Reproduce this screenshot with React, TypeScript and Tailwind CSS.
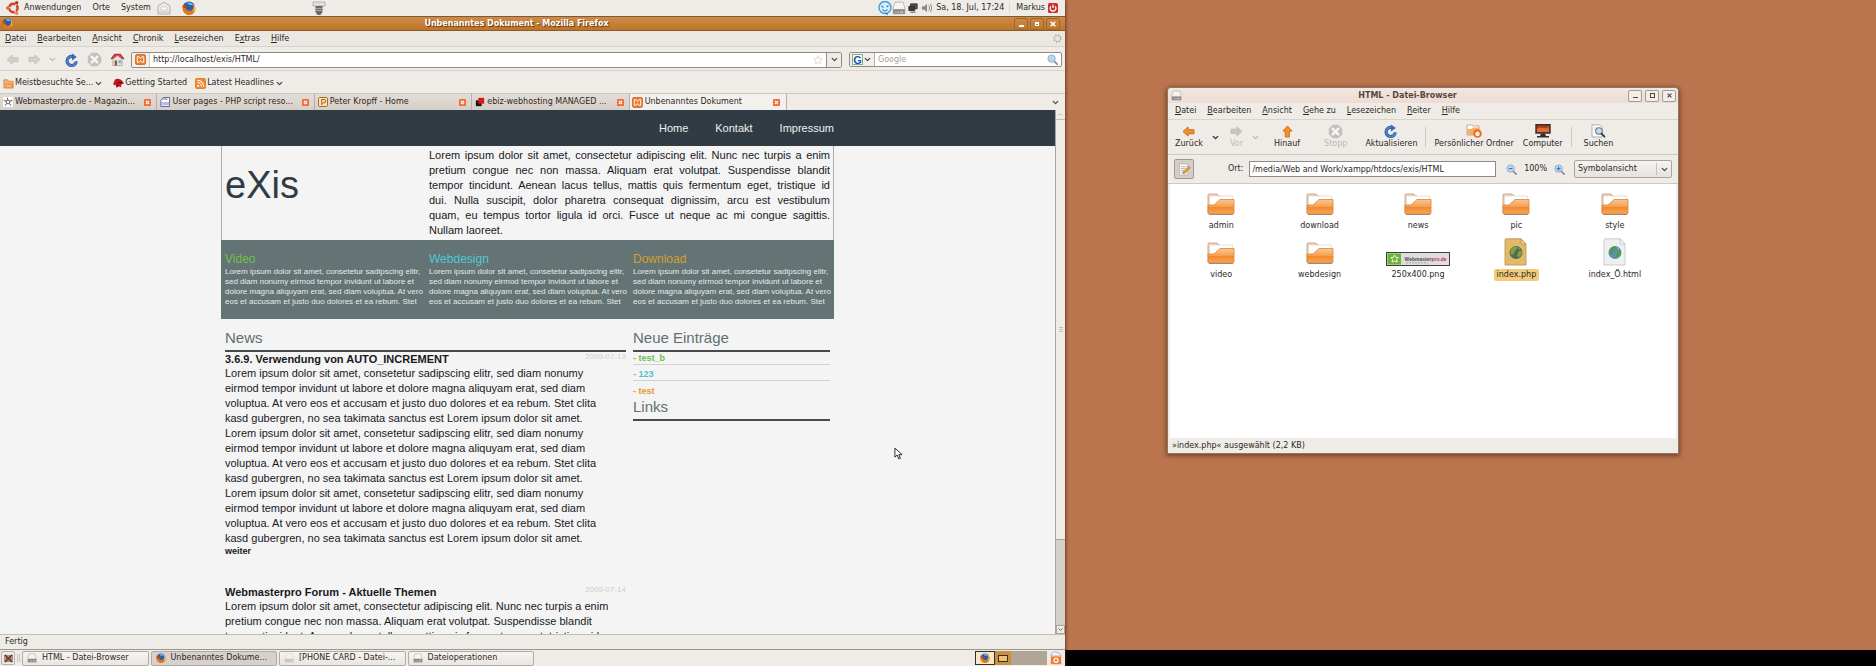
import React from "react";
import { ChevronDown, ChevronUp } from "lucide-react";

type IconProps = { className?: string };

const Firefox = ({ className = "size-[14px]" }: IconProps) => (
  <svg viewBox="0 0 16 16" className={className} aria-hidden="true">
    <circle cx="8" cy="7.6" r="7" fill="#2d5fa8" />
    <path d="M6 2c3-1 6 0 7 3-2-1-4 0-5-1-1 0-2-1-2-2Z" fill="#7db6e8" />
    <path d="M1 4c0 3 1 4 3 4 1 2 3 4 6 3 3-1 4-4 3-7 2 2 3 5 2 7-1 3-4 5-7 5S1 13 .6 9C.4 7 .5 5 1 4Z" fill="#e2761b" />
    <path d="M12.500 2c2 2 3 5 2.500 8-1 1-2 2-3 2 2-3 2-6 .5-10Z" fill="#f5c542" />
    <path d="M1 4c1 1 2 1 4 1l1 2-2 1C2 8 1 7 1 4Z" fill="#c2451a" />
  </svg>
);

const Ubuntu = () => (
  <svg viewBox="0 0 16 16" className="size-[14px]" aria-hidden="true">
    <circle cx="8.500" cy="8" r="4.800" fill="none" stroke="#d2412a" strokeWidth="2.800" strokeDasharray="8.500 1.550" strokeDashoffset="4.200" />
    <circle cx="1.900" cy="8" r="1.900" fill="#e0663a" />
    <circle cx="12.200" cy="2" r="1.900" fill="#b5301e" />
    <circle cx="12.200" cy="14" r="1.900" fill="#e58a4a" />
  </svg>
);

const Drive = ({ className = "size-[12px]" }: IconProps) => (
  <svg viewBox="0 0 12 12" className={className} aria-hidden="true">
    <path d="M2.500 1h7l1.500 5v5H1V6Z" fill="#f4f4f3" stroke="#b9b6b2" strokeWidth=".8" />
    <path d="M1 7h10v4H1Z" fill="#8b8987" />
    <path d="M3 9.500h1M5 9.500h1M7 9.500h2.500" stroke="#dedcda" strokeWidth="1" />
  </svg>
);

const Reload = ({ className = "size-[15px]" }: IconProps) => (
  <svg viewBox="0 0 16 16" className={className} aria-hidden="true">
    <path d="M12.800 9.500A5.200 5.200 0 1 1 8.500 4" fill="none" stroke="#27549f" strokeWidth="3.600" />
    <path d="M12.800 9.500A5.200 5.200 0 1 1 8.500 4" fill="none" stroke="#4f83d0" strokeWidth="2" />
    <path d="M8 .5 13.500 4.500 8 8.500Z" fill="#3668b5" />
  </svg>
);

const StopIcon = () => (
  <svg viewBox="0 0 16 16" className="size-[15px]" aria-hidden="true">
    <path d="M5 .8h6L15.200 5v6L11 15.200H5L.8 11V5Z" fill="#c3c0bd" />
    <path d="m5 5 6 6m0-6-6 6" stroke="#f8f6f4" strokeWidth="2.600" strokeLinecap="round" />
  </svg>
);

const Arrow = ({ fill, stroke, className = "" }: { fill: string; stroke: string; className?: string }) => (
  <svg viewBox="0 0 14 12" className={"h-[11px] w-[13px] " + className} aria-hidden="true">
    <path d="M1 6 6.500 1v3H13v4.500H6.500V11Z" fill={fill} stroke={stroke} strokeWidth="1" strokeLinejoin="round" />
  </svg>
);

const HomeIcon = () => (
  <svg viewBox="0 0 16 14" className="h-[13px] w-[15px]" aria-hidden="true">
    <path d="M3 6h10v7.500H3Z" fill="#e9e4dc" stroke="#a19c96" strokeWidth=".8" />
    <path d="M5 8h2.500v5.500H5Z" fill="#8c5a33" />
    <path d="M9 8h3v3H9Z" fill="#7fa8d8" />
    <path d="M1 6.500 5 1.500h6l4 5" fill="#c75252" stroke="#a93636" strokeWidth="1.200" />
    <path d="m3 7 5-4 5 4Z" fill="#e9e4dc" />
  </svg>
);

const Xampp = () => (
  <svg viewBox="0 0 12 12" className="size-[11px] shrink-0" aria-hidden="true">
    <rect x=".5" y=".5" width="11" height="11" rx="2" fill="#ee7c33" stroke="#d0672a" />
    <path d="M2.500 3h2L6 4.800 7.500 3h2v6h-2L6 7.200 4.500 9h-2Z" fill="none" stroke="#fff" strokeWidth="1" strokeLinejoin="round" />
  </svg>
);

const Magnifier = ({ sign }: { sign?: "+" | "-" }) => (
  <svg viewBox="0 0 12 12" className="size-[11px] shrink-0" aria-hidden="true">
    <path d="m7.500 7.500 3.500 3.500" stroke="#8b8f94" strokeWidth="2" strokeLinecap="round" />
    <circle cx="5" cy="5" r="4" fill="#b9d6ef" stroke="#8fabc6" strokeWidth="1" />
    {sign && <path d="M3 5h4" stroke="#3b73ad" strokeWidth="1.200" />}
    {sign === "+" && <path d="M5 3v4" stroke="#3b73ad" strokeWidth="1.200" />}
  </svg>
);

const TabClose = () => (
  <svg viewBox="0 0 8 8" className="size-[7px] shrink-0" aria-hidden="true">
    <rect width="8" height="8" rx="1" fill="#ee6f35" />
    <path d="m2.200 2.200 3.600 3.600m0-3.600L2.200 5.800" stroke="#fff" strokeWidth="1.400" />
  </svg>
);

const Chev = ({ className = "text-[#4a4643]" }: IconProps) => (
  <ChevronDown className={"size-[9px] shrink-0 " + className} strokeWidth={3.5} aria-hidden="true" />
);

const Folder = () => (
  <svg viewBox="0 0 28 22" className="mb-[2px] h-[22px] w-[28px]" aria-hidden="true">
    <defs>
      <linearGradient id="folderFront" x1="0" y1="0" x2="0" y2="1">
        <stop offset="0" stopColor="#f9c795" />
        <stop offset=".5" stopColor="#f6a04f" />
        <stop offset=".55" stopColor="#f08a30" />
        <stop offset="1" stopColor="#f8a755" />
      </linearGradient>
    </defs>
    <path d="M1 2q0-1 1-1h8l1.500 2H13V20H1Z" fill="#f4d9be" stroke="#b98a64" strokeWidth=".7" />
    <path d="M2.500 3h23v16h-23Z" fill="#fff" stroke="#d2ccc6" strokeWidth=".6" />
    <path d="M1 12h6l6-5.500h14V20q0 1-1 1H2q-1 0-1-1Z" fill="url(#folderFront)" stroke="#dd8437" strokeWidth=".8" />
    <path d="M2 21.500h24" stroke="#8f7562" strokeWidth=".8" />
  </svg>
);

const WebFile = ({ selected }: { selected?: boolean }) => (
  <svg viewBox="0 0 24 28" className="h-[28px] w-[24px]" aria-hidden="true">
    <path d="M2 .8h15l5 5.200v21H1V2Q1 .8 2 .8Z" fill={selected ? "#e3b866" : "#eef0ef"} stroke={selected ? "#b8904a" : "#c0c3c1"} strokeWidth=".8" />
    <path d="M17 .8 17.500 6H22Z" fill={selected ? "#f1d493" : "#fff"} stroke={selected ? "#a88345" : "#a9acab"} strokeWidth=".6" />
    <circle cx="12" cy="14.500" r="6.500" fill={selected ? "#4c6f52" : "#5e8fae"} />
    <path d="M7 11c2-3 5-3 6-2s-1 3-2 4-1 4-3 4-2-4-1-6Zm8 2c2-1 3 0 3 2s-2 4-4 4 0-5 1-6Z" fill={selected ? "#8a9a3c" : "#4f9a55"} />
    <path d="M14 9.500c1 0 2 1 2 2Z" fill="#dfe6c8" />
  </svg>
);

const Banner = () => (
  <svg viewBox="0 0 64 14" className="h-[14px] w-[64px]" aria-label="Webmasterpro.de" role="img">
    <rect x=".5" y=".5" width="63" height="13" fill="#dedede" stroke="#3d3f3d" />
    <rect x="1.500" y="1.500" width="13.500" height="11" fill="#6cb33a" />
    <path d="m8.500 3 1.200 2.300 2.500.2-1.600 1.900.6 2.600-2.700-1-2.500 1 .5-2.600-1.500-1.900 2.500-.2Z" fill="none" stroke="#f0f7d8" strokeWidth="1" />
    <text x="18.500" y="9" fontSize="5" fontWeight="bold" fontFamily="Liberation Sans, sans-serif" fill="#4f4a4d">
      Webmaster<tspan fill="#c32a48">pro.de</tspan>
    </text>
    <path d="M20 10.800h22" stroke="#9b9b9b" strokeWidth=".8" strokeDasharray="2 1" />
  </svg>
);

const MenuItem = ({ label, at = 0 }: { label: string; at?: number }) => (
  <button type="button" className="whitespace-nowrap">
    {label.slice(0, at)}
    <span className="underline underline-offset-1">{label[at]}</span>
    {label.slice(at + 1)}
  </button>
);

function TopPanel() {
  return (
    <header className="flex h-4 shrink-0 items-center bg-[#efece8] pl-[6px] pr-[7px]">
      <Ubuntu />
      <nav className="ml-1 flex gap-[11px]">
        <button type="button">Anwendungen</button>
        <button type="button">Orte</button>
        <button type="button">System</button>
      </nav>
      <svg viewBox="0 0 14 14" className="ml-[6px] size-[14px]" aria-hidden="true">
        <path d="M1 5 7 1l6 4v8H1Z" fill="#eceae7" stroke="#b5b2ae" />
        <path d="M4 6h6v3H4Z" fill="#fff" stroke="#c4c1bd" strokeWidth=".7" />
        <path d="M2 11h10" stroke="#c4c1bd" />
      </svg>
      <Firefox className="ml-[11px] size-[14px]" />
      <svg viewBox="0 0 14 14" className="ml-[116px] size-[14px]" aria-hidden="true">
        <path d="M1 1h12v4H1Z" fill="#e4e2df" stroke="#a9a6a3" strokeWidth=".8" />
        <path d="M3.500 5h7v6l-2 3h-3l-2-3Z" fill="#6b6967" />
        <path d="M4 7.500h6M4 9.500h6" stroke="#c9c7c5" strokeWidth=".7" />
      </svg>
      <div className="ml-auto flex items-center">
        <svg viewBox="0 0 14 14" className="size-[14px]" aria-hidden="true">
          <circle cx="7" cy="6.500" r="6" fill="#d9eefb" stroke="#3d9be0" strokeWidth="1.400" />
          <path d="M3.500 5 5.500 6.500M10.500 4.500l-2 1.500M4.500 8.500c1 2 4 2 5 0M7 12l3 1.500" fill="none" stroke="#2c85cc" strokeWidth="1.200" />
        </svg>
        <Drive className="size-[14px]" />
        <svg viewBox="0 0 12 12" className="ml-[2px] size-[10px]" aria-hidden="true">
          <path d="M3 1h8v6H3Z" fill="#55524f" stroke="#2f2d2b" />
          <path d="M1 4h7v5H1ZM3 11h6" fill="#3b3937" stroke="#2f2d2b" />
        </svg>
        <svg viewBox="0 0 12 12" className="ml-[4px] size-[10px]" aria-hidden="true">
          <path d="M0 4h3l3-3v10L3 8H0Z" fill="#8a8784" />
          <path d="M8 3c1.500 2 1.500 4 0 6m2-8c2 3 2 7 0 10" fill="none" stroke="#8a8784" strokeWidth="1.200" />
        </svg>
        <time className="ml-[4px]">Sa, 18. Jul, 17:24</time>
        <button type="button" className="ml-[5px] flex items-center gap-[3px] border-l border-[#dcd8d3] pl-[6px]">
          Markus
          <svg viewBox="0 0 10 10" className="size-[10px]" aria-hidden="true">
            <rect width="10" height="10" rx="1.500" fill="#cf2f2f" />
            <path d="M3 3.300a2.800 2.800 0 1 0 4 0M5 1.500V5" fill="none" stroke="#fff" strokeWidth="1.200" />
          </svg>
        </button>
      </div>
    </header>
  );
}

function TitleBar() {
  return (
    <div className="grid h-[15px] shrink-0 grid-cols-[1fr_auto_1fr] items-center border-y border-t-[#7b5a38] border-b-[#8d5a26] bg-linear-to-b from-[#cf8b47] to-[#bd752a] pl-[2px] pr-[5px] font-bold text-white">
      <Firefox className="size-[11px]" />
      <h1 className="pr-[29px] [text-shadow:1px_1px_1px_#5b3510]">Unbenanntes Dokument - Mozilla Firefox</h1>
      <div className="flex items-center justify-end gap-[2px]">
        <button type="button" aria-label="Minimieren" className="flex h-[12px] w-[14px] items-end justify-center rounded-xs border border-[#a0672a] pb-[2px]"><span className="h-[2px] w-[5px] bg-white" /></button>
        <button type="button" aria-label="Wiederherstellen" className="flex h-[12px] w-[14px] items-center justify-center rounded-xs border border-[#a0672a]"><span className="size-[4px] border border-t-2 border-white" /></button>
        <button type="button" aria-label="Schließen" className="flex h-[12px] w-[14px] items-center justify-center rounded-xs border border-[#a0672a]">
          <svg viewBox="0 0 6 6" className="size-[6px]" aria-hidden="true"><path d="m.7.7 4.600 4.600m0-4.600L.7 5.300" stroke="#fff" strokeWidth="1.500" /></svg>
        </button>
      </div>
    </div>
  );
}

function NavBar() {
  return (
    <div className="flex h-[24px] shrink-0 items-center border-b border-[#d6d1cb] pt-[2px] pl-[6px] pr-[3px]">
      <button type="button" aria-label="Zurück"><Arrow fill="#d2cfcb" stroke="#c4c0bc" /></button>
      <button type="button" aria-label="Vor" className="ml-[9px]"><Arrow fill="#d2cfcb" stroke="#c4c0bc" className="rotate-180" /></button>
      <Chev className="ml-[7px] text-[#bdb9b5]" />
      <button type="button" aria-label="Neu laden" className="ml-[8px]"><Reload className="size-[14px]" /></button>
      <button type="button" aria-label="Stopp" className="ml-[8px]"><StopIcon /></button>
      <button type="button" aria-label="Startseite" className="ml-[8px]"><HomeIcon /></button>
      <div className="ml-[6px] flex h-[16px] flex-1 items-center rounded-xs border border-[#8f8a85] bg-white">
        <span className="flex h-full items-center border-r border-[#cfcac5] bg-[#f1eeeb] px-[3px]"><Xampp /></span>
        <input aria-label="Adresse" defaultValue="http://localhost/exis/HTML/" className="min-w-0 flex-1 px-[3px] outline-none" />
        <svg viewBox="0 0 12 12" className="mr-[3px] size-[10px]" aria-hidden="true"><path d="m6 1 1.500 3.300 3.500.4-2.600 2.400.7 3.500L6 8.900l-3.100 1.700.7-3.500L1 4.700l3.500-.4Z" fill="#fff" stroke="#cbc8c5" strokeWidth=".8" /></svg>
        <button type="button" aria-label="Verlauf" className="flex h-full w-[15px] items-center justify-center border-l border-[#8f8a85] bg-[#efece8]"><Chev /></button>
      </div>
      <div className="ml-[7px] flex h-[15px] w-[213px] items-center rounded-xs border border-[#8f8a85] bg-white pr-[3px]">
        <button type="button" aria-label="Suchmaschine" className="flex h-full items-center border-r border-[#b5b0ab] bg-[#f1eeeb] px-[2px]">
          <span className="flex size-[11px] items-center justify-center border border-[#7db47a] bg-white font-['Liberation_Sans',sans-serif] text-[11px] leading-[10px] font-bold text-[#2551c4]">G</span>
          <Chev />
        </button>
        <input aria-label="Suche" placeholder="Google" className="min-w-0 flex-1 px-[3px] outline-none placeholder:text-[#a5a19d]" />
        <Magnifier />
      </div>
    </div>
  );
}

function Bookmarks() {
  return (
    <div className="flex h-[22px] shrink-0 items-center pt-[2px] pl-[3px]">
      <button type="button" className="flex items-center gap-[1px]">
        <svg viewBox="0 0 12 12" className="size-[11px]" aria-hidden="true">
          <path d="M1 2h4l1 1.500h5V11H1Z" fill="#f3b47a" stroke="#d07c33" strokeWidth=".8" />
          <path d="M3 6h8v5H3Z" fill="#ef8e3a" />
          <path d="M4.500 8h1.500M7 8h1.500M4.500 9.500h1.500M7 9.500h1.500" stroke="#fff" strokeWidth=".8" />
        </svg>
        Meistbesuchte Se...<Chev />
      </button>
      <button type="button" className="ml-[10px] flex items-center gap-[1px]">
        <svg viewBox="0 0 12 12" className="size-[11px]" aria-hidden="true">
          <path d="M2 2c2-2 6-1 8 1l2 3-3 1v3l-3-1-2 2-1-3-3-1Z" fill="#c41620" />
          <path d="M5 5h5M4 8l2 1" stroke="#4b070b" strokeWidth="1.200" />
        </svg>
        Getting Started
      </button>
      <button type="button" className="ml-[8px] flex items-center gap-[1px]">
        <svg viewBox="0 0 12 12" className="size-[11px]" aria-hidden="true">
          <rect x=".5" y=".5" width="11" height="11" rx="1.500" fill="#f08a35" stroke="#d66f1c" strokeWidth=".8" />
          <circle cx="3.500" cy="8.600" r="1.100" fill="#fff" />
          <path d="M2.500 5a4.500 4.500 0 0 1 4.500 4.500M2.500 2.500a7 7 0 0 1 7 7" fill="none" stroke="#fff" strokeWidth="1.100" />
        </svg>
        Latest Headlines<Chev />
      </button>
    </div>
  );
}

const tabs: { title: string; icon: React.ReactNode; active?: boolean }[] = [
  {
    title: "Webmasterpro.de - Magazin...",
    icon: (
      <svg viewBox="0 0 12 12" className="size-[10px] shrink-0" aria-hidden="true">
        <rect width="12" height="12" fill="#fff" />
        <path d="M6 3.500 5 .8M8.300 5l2.900-1M7.700 8l2 2.500M4.300 8l-2 2.500M3.700 5 .8 4" stroke="#47433f" strokeWidth="1.100" />
        <circle cx="6" cy="6" r="2.200" fill="none" stroke="#47433f" />
      </svg>
    ),
  },
  {
    title: "User pages - PHP script reso...",
    icon: (
      <svg viewBox="0 0 12 12" className="size-[10px] shrink-0" aria-hidden="true">
        <path d="M4 .6h7.400v10.800H1V4Z" fill="#fff" stroke="#51508a" />
        <path d="M1.500 6h9.500v4H1.500Z" fill="#b9b7ee" />
        <path d="M3 2.500h6" stroke="#51508a" />
      </svg>
    ),
  },
  {
    title: "Peter Kropff - Home",
    icon: (
      <svg viewBox="0 0 12 12" className="size-[10px] shrink-0" aria-hidden="true">
        <rect x=".6" y=".6" width="10.800" height="10.800" rx="1.500" fill="#f7e3c4" stroke="#b06a1c" strokeWidth="1.200" />
        <path d="M4.500 10V3h2.500a2 2 0 0 1 0 4.200H4.500" fill="none" stroke="#b06a1c" strokeWidth="1.300" />
      </svg>
    ),
  },
  {
    title: "ebiz-webhosting MANAGED ...",
    icon: (
      <svg viewBox="0 0 12 12" className="size-[10px] shrink-0" aria-hidden="true">
        <path d="M1 4h7v7H1Z" fill="#1c1614" />
        <path d="M4 1h7v7H4Z" fill="#e0141c" />
      </svg>
    ),
  },
  { title: "Unbenanntes Dokument", icon: <Xampp />, active: true },
];

function TabBar() {
  return (
    <div className="flex h-[17px] shrink-0 items-stretch border-t border-[#cdc7c1]">
      <div role="tablist" className="flex w-[787px] items-stretch">
        {tabs.map((t) => (
          <div
            key={t.title}
            className={
              t.active
                ? "flex flex-1 items-center border-r border-[#b8b1aa] bg-[#f3f1ee] pl-[2px] pr-[6px]"
                : "flex flex-1 items-center border-r border-[#b8b1aa] bg-linear-to-b from-[#e3ddd7] to-[#d6cfc8] pl-[3px] pr-[5px]"
            }
          >
            {t.icon}
            <button type="button" role="tab" aria-selected={!!t.active} className="ml-[2px] min-w-0 flex-1 overflow-hidden text-left whitespace-nowrap">
              {t.title}
            </button>
            <button type="button" aria-label="Tab schließen"><TabClose /></button>
          </div>
        ))}
      </div>
      <button type="button" aria-label="Alle Tabs" className="mr-[5px] ml-auto flex items-center"><Chev /></button>
    </div>
  );
}

const blurb = [
  "Lorem ipsum dolor sit amet, consetetur sadipscing elitr,",
  "sed diam nonumy eirmod tempor invidunt ut labore et",
  "dolore magna aliquyam erat, sed diam voluptua. At vero",
  "eos et accusam et justo duo dolores et ea rebum. Stet",
];
const news = [
  "Lorem ipsum dolor sit amet, consetetur sadipscing elitr, sed diam nonumy",
  "eirmod tempor invidunt ut labore et dolore magna aliquyam erat, sed diam",
  "voluptua. At vero eos et accusam et justo duo dolores et ea rebum. Stet clita",
  "kasd gubergren, no sea takimata sanctus est Lorem ipsum dolor sit amet.",
];
const forum = [
  "Lorem ipsum dolor sit amet, consectetur adipiscing elit. Nunc nec turpis a enim",
  "pretium congue nec non massa. Aliquam erat volutpat. Suspendisse blandit",
  "tempor tincidunt. Aenean lacus tellus, mattis quis fermentum eget, tristique id",
];
const intro = [
  ...forum,
  "dui. Nulla suscipit, dolor pharetra consequat dignissim, arcu est vestibulum",
  "quam, eu tempus tortor ligula id orci. Fusce ut neque ac mi congue sagittis.",
];

const Lines = ({ lines }: { lines: string[] }) => (
  <>
    {lines.map((l, i) => (
      <span key={i} className="block whitespace-nowrap">{l}</span>
    ))}
  </>
);

const teasers = [
  { title: "Video", color: "text-[#6fc24a]" },
  { title: "Webdesign", color: "text-[#4fc9d6]" },
  { title: "Download", color: "text-[#d2a02f]" },
];

const Heading = ({ children }: { children: React.ReactNode }) => (
  <h2 className="h-[24px] border-b-2 border-[#46494d] text-[15px] leading-[20px] text-[#5f7072]">{children}</h2>
);

function Article({ title, date, lines }: { title: string; date: string; lines: string[] }) {
  return (
    <article>
      <div className="flex h-[14px] items-start justify-between">
        <h3 className="leading-[14px] font-bold">{title}</h3>
        <time className="text-[8px] leading-[10px] text-[#cfcfcf]">{date}</time>
      </div>
      <p><Lines lines={lines} /></p>
    </article>
  );
}

function WebPage() {
  return (
    <div className="flex min-h-0 flex-1">
      <main className="min-w-0 flex-1 overflow-hidden bg-[#f4f4f4] font-['Liberation_Sans',Arial,sans-serif] text-[11px] leading-[15px] text-[#17191d]">
        <div className="h-[36px] bg-[#303b43]">
          <nav className="mx-auto flex h-full w-[613px] items-center justify-end gap-[27px] text-[#eef1f3]">
            <a href="#home">Home</a>
            <a href="#kontakt">Kontakt</a>
            <a href="#impressum">Impressum</a>
          </nav>
        </div>
        <div className="mx-auto w-[613px]">
          <div className="grid h-[94px] grid-cols-[204px_1fr] border-x border-[#a9adb0] pl-[3px] pr-[3px] pt-[2px]">
            <div className="pt-[15px] text-[38px] leading-[44px] text-[#303b43]">eXis</div>
            <p>
              {intro.map((l) => (
                <span key={l} className="block whitespace-nowrap [text-align-last:justify]">{l}</span>
              ))}
              Nullam laoreet.
            </p>
          </div>
          <div className="grid h-[79px] grid-cols-[204px_204px_1fr] bg-[#647475] pl-[4px] pt-[11px]">
            {teasers.map((t) => (
              <section key={t.title}>
                <h2 className={"text-[12px] leading-[16px] " + t.color}>{t.title}</h2>
                <p className="text-[8px] leading-[10px] text-[#e6eaea]"><Lines lines={blurb} /></p>
              </section>
            ))}
          </div>
          <div className="grid grid-cols-[401px_1fr] gap-[7px] pl-[4px] pr-[4px] pt-[9px]">
            <div>
              <Heading>News</Heading>
              <Article title="3.6.9. Verwendung von AUTO_INCREMENT" date="2009-07-13" lines={[...news, ...news, ...news]} />
              <a href="#weiter" className="block text-[9px] leading-[10px] font-bold">weiter</a>
              <div className="pt-[29px]">
                <Article title="Webmasterpro Forum - Aktuelle Themen" date="2009-07-14" lines={forum} />
              </div>
            </div>
            <aside>
              <Heading>Neue Einträge</Heading>
              <ul className="text-[9px] leading-[12px] font-bold">
                <li className="border-b border-[#d2d2d2] text-[#6cc04a]"><a href="#b">- test_b</a></li>
                <li className="border-b border-[#d2d2d2] pt-[3px] text-[#52bfd0]"><a href="#123">- 123</a></li>
                <li className="pt-[4px] text-[#e69a2a]"><a href="#test">- test</a></li>
              </ul>
              <Heading>Links</Heading>
            </aside>
          </div>
        </div>
      </main>
      <div className="flex w-[10px] shrink-0 flex-col border-l border-[#a9a49f] bg-[#d4cfca]">
        <button type="button" aria-label="Nach oben" className="flex h-[10px] items-center justify-center border-b border-[#c2bdb7] bg-[#efece8]">
          <ChevronUp className="size-[7px] text-[#b3aea9]" strokeWidth={3} />
        </button>
        <div className="flex flex-1 flex-col">
          <div className="flex h-[420px] max-h-full flex-col items-center justify-center gap-px border-b border-[#a9a49f] bg-[#efece8]">
            <span className="h-px w-[4px] bg-[#c2bdb7]" />
            <span className="h-px w-[4px] bg-[#c2bdb7]" />
            <span className="h-px w-[4px] bg-[#c2bdb7]" />
          </div>
        </div>
        <button type="button" aria-label="Nach unten" className="flex h-[9px] items-center justify-center border border-[#a9a49f] bg-[#efece8]">
          <ChevronDown className="size-[7px] text-[#5b5652]" strokeWidth={3} />
        </button>
      </div>
    </div>
  );
}

const tasks = [
  { title: "HTML - Datei-Browser", icon: <Drive className="size-[10px]" /> },
  { title: "Unbenanntes Dokume...", icon: <Firefox className="size-[10px]" />, active: true },
  { title: "[PHONE CARD - Datei-...", icon: <Drive className="size-[10px] opacity-40" /> },
  { title: "Dateioperationen", icon: <Drive className="size-[10px]" /> },
];

function TaskBar() {
  return (
    <footer className="flex h-[17px] shrink-0 items-center border-t border-[#9c9791] bg-[#efece8] px-px">
      <button type="button" aria-label="Desktop anzeigen" className="flex h-[14px] w-[14px] items-center justify-center rounded-xs border border-[#b8b2ac]">
        <svg viewBox="0 0 10 10" className="size-[9px]" aria-hidden="true">
          <path d="M0 1h10v8H0Z" fill="#b98a78" />
          <path d="m1 1 3 3M9 1 6 4M1 9l3-3m5 3L6 6" stroke="#2f2926" strokeWidth="1.200" />
          <path d="M3 3.500h4v3H3Z" fill="#7c3a2a" />
        </svg>
      </button>
      <span className="mx-[2px] h-[8px] w-[3px] border-x border-[#c9c4be]" />
      <div className="flex w-[512px] gap-[2px]">
        {tasks.map((t) => (
          <button
            key={t.title}
            type="button"
            className={
              "flex h-[15px] flex-1 items-center gap-[5px] overflow-hidden rounded-xs border border-[#b0aaa4] pl-[4px] whitespace-nowrap " +
              (t.active ? "bg-[#d8d1ca]" : "bg-linear-to-b from-[#f6f4f2] to-[#e9e5e1]")
            }
          >
            {t.icon}
            {t.title}
          </button>
        ))}
      </div>
      <div className="ml-auto flex h-[14px] w-[72px] bg-[#b3a596]">
        <div className="flex w-[20px] items-center justify-center border border-[#3b2f22] bg-[#f8e8c8]"><Firefox className="size-[10px]" /></div>
        <div className="flex w-[16px] items-center justify-center bg-[#c8913f]"><span className="h-[7px] w-[10px] border border-[#3b2f22] bg-[#eebf6c]" /></div>
      </div>
      <svg viewBox="0 0 12 14" className="mr-[2px] ml-[3px] h-[14px] w-[12px]" aria-hidden="true">
        <path d="M1 5c0-3 3-5 5-4s5 1 5 4Z" fill="#f2f2f2" stroke="#a9a6a3" strokeWidth=".8" />
        <path d="M.8 5.500h10.400V13.200H.8Z" fill="#ef7f33" />
        <circle cx="6" cy="9.300" r="2" fill="none" stroke="#fff" strokeWidth="1.200" />
      </svg>
    </footer>
  );
}

const Tool = ({ label, icon, disabled, className = "" }: { label: string; icon: React.ReactNode; disabled?: boolean; className?: string }) => (
  <button type="button" disabled={disabled} className={"flex flex-col items-center whitespace-nowrap " + (disabled ? "text-[#bdb8b3] " : "") + className}>
    <span className="flex h-[14px] items-center">{icon}</span>
    <span className="leading-[12px]">{label}</span>
  </button>
);

const WinButton = ({ label, children }: { label: string; children: React.ReactNode }) => (
  <button type="button" aria-label={label} className="flex h-[12px] w-[14px] items-center justify-center rounded-xs border border-[#a39c95] bg-[#f1eeeb]">{children}</button>
);

const files: { name: string; icon: React.ReactNode; selected?: boolean }[] = [
  { name: "admin", icon: <Folder /> },
  { name: "download", icon: <Folder /> },
  { name: "news", icon: <Folder /> },
  { name: "pic", icon: <Folder /> },
  { name: "style", icon: <Folder /> },
  { name: "video", icon: <Folder /> },
  { name: "webdesign", icon: <Folder /> },
  { name: "250x400.png", icon: <Banner /> },
  { name: "index.php", icon: <WebFile selected />, selected: true },
  { name: "index_Ö.html", icon: <WebFile /> },
];

function FileBrowser() {
  return (
    <section className="flex h-[367px] w-full max-w-[512px] flex-col rounded-t-sm border border-[#8f7767] bg-[#efece8] shadow-[0_1px_4px_1px_rgba(70,35,15,0.6)]">
      <div className="grid h-[15px] shrink-0 grid-cols-[1fr_auto_1fr] items-center rounded-t-sm bg-linear-to-b from-[#f3e6df] to-[#ecdcd4] pl-[3px] pr-[2px]">
        <Drive className="size-[11px]" />
        <h2 className="pr-[32px] font-bold text-[#57463e]">HTML - Datei-Browser</h2>
        <div className="flex justify-end gap-[3px]">
          <WinButton label="Minimieren"><span className="mt-[3px] h-px w-[5px] bg-[#57463e]" /></WinButton>
          <WinButton label="Maximieren"><span className="size-[5px] border border-[#57463e]" /></WinButton>
          <WinButton label="Schließen">
            <svg viewBox="0 0 6 6" className="size-[5px]" aria-hidden="true"><path d="m.7.7 4.600 4.600m0-4.600L.7 5.300" stroke="#57463e" strokeWidth="1.400" /></svg>
          </WinButton>
        </div>
      </div>
      <nav className="flex h-[17px] shrink-0 items-center gap-[11px] border-b border-[#d8d3cd] pl-[7px]">
        {["Datei", "Bearbeiten", "Ansicht", "Gehe zu", "Lesezeichen", "Reiter", "Hilfe"].map((m) => (
          <MenuItem key={m} label={m} />
        ))}
      </nav>
      <div className="flex h-[35px] shrink-0 items-center border-b border-[#cfc9c3] pl-[7px]">
        <Tool label="Zurück" icon={<Arrow fill="#f48f2c" stroke="#c9691a" />} />
        <Chev className="ml-[8px]" />
        <Tool label="Vor" disabled className="ml-[10px]" icon={<Arrow fill="#c9c5c1" stroke="#c0bcb8" className="rotate-180" />} />
        <Chev className="ml-[8px] text-[#bdb8b3]" />
        <Tool label="Hinauf" className="ml-[14px]" icon={<Arrow fill="#f48f2c" stroke="#c9691a" className="rotate-90" />} />
        <Tool label="Stopp" disabled className="ml-[24px]" icon={<StopIcon />} />
        <Tool label="Aktualisieren" className="ml-[18px]" icon={<Reload className="size-[14px]" />} />
        <span className="ml-[8px] h-[20px] w-px bg-[#cfc9c3]" />
        <Tool
          label="Persönlicher Ordner"
          className="ml-[8px]"
          icon={
            <svg viewBox="0 0 16 14" className="h-[14px] w-[16px]" aria-hidden="true">
              <path d="M1 1h5l1 1h6v9H1Z" fill="#fff" stroke="#b98a64" strokeWidth=".7" />
              <path d="M1 5h4l2-1.500h6V11H1Z" fill="#f3ad6c" />
              <circle cx="11.500" cy="9.500" r="4.300" fill="#ee6d1a" />
              <path d="m9 9.800 2.500-2.300L14 9.800M10 9.500v2h3v-2" fill="#fff" stroke="#fff" strokeWidth=".8" />
            </svg>
          }
        />
        <Tool
          label="Computer"
          className="ml-[9px]"
          icon={
            <svg viewBox="0 0 16 14" className="h-[14px] w-[16px]" aria-hidden="true">
              <path d="M1 .8h14V9H1Z" fill="#b23a1c" stroke="#35302d" strokeWidth="1.400" />
              <path d="M2 5c4-3 8 1 12-2v5H2Z" fill="#e56b3c" />
              <path d="M6 9.500h4l1 2.500h3v1.500H2V12h3Z" fill="#35302d" />
            </svg>
          }
        />
        <span className="ml-[8px] h-[20px] w-px bg-[#cfc9c3]" />
        <Tool
          label="Suchen"
          className="ml-[12px]"
          icon={
            <svg viewBox="0 0 16 14" className="h-[14px] w-[16px]" aria-hidden="true">
              <path d="M2 .8h8l2 2V13H2Z" fill="#fff" stroke="#a9a6a3" strokeWidth=".9" />
              <path d="M4 4h5M4 6h4" stroke="#c9c6c3" strokeWidth=".8" />
              <circle cx="9" cy="7" r="3.300" fill="#c3dcf0" stroke="#70777e" strokeWidth="1.100" />
              <path d="m11.500 9.700 3 3" stroke="#33363a" strokeWidth="1.800" strokeLinecap="round" />
            </svg>
          }
        />
      </div>
      <div className="flex h-[29px] shrink-0 items-center border-b border-[#cfc9c3] pl-[6px] pr-[6px]">
        <button type="button" aria-label="Pfad bearbeiten" className="flex size-[20px] items-center justify-center rounded-xs border border-[#9f9892] bg-[#d5cec8]">
          <svg viewBox="0 0 14 14" className="size-[13px]" aria-hidden="true">
            <path d="M1.500 1h9v12h-9Z" fill="#fbfbfa" stroke="#b0aca8" strokeWidth=".8" />
            <path d="M3 4h6M3 6h5M3 8h4M3 10h5" stroke="#a3a09d" strokeWidth=".8" />
            <path d="m6 9.500 5.500-6L13.200 5l-5.500 6-2.200.6Z" fill="#f1a43a" stroke="#9c6a22" strokeWidth=".7" />
          </svg>
        </button>
        <label htmlFor="path" className="ml-[34px]">Ort:</label>
        <input id="path" defaultValue="/media/Web and Work/xampp/htdocs/exis/HTML" className="ml-[6px] h-[16px] min-w-0 flex-1 border border-[#8f8a85] bg-white px-[2px] outline-none" />
        <button type="button" aria-label="Verkleinern" className="ml-[10px]"><Magnifier sign="-" /></button>
        <span className="ml-[7px]">100%</span>
        <button type="button" aria-label="Vergrößern" className="ml-[7px]"><Magnifier sign="+" /></button>
        <div className="ml-[9px] grid h-[18px] w-[98px] grid-cols-[1fr_15px] items-center rounded-xs border border-[#aaa49e] bg-linear-to-b from-[#f6f4f2] to-[#e6e2de]">
          <select aria-label="Ansicht" className="col-span-2 col-start-1 row-start-1 h-full appearance-none pl-[3px] outline-none">
            <option>Symbolansicht</option>
          </select>
          <span className="pointer-events-none col-start-2 row-start-1 flex h-[12px] items-center justify-center border-l border-[#c6c0ba]"><Chev /></span>
        </div>
      </div>
      <ul className="mx-[2px] grid flex-1 auto-rows-[49px] grid-cols-5 bg-white pt-[5px] pr-[12px] pl-[2px]">
        {files.map((f) => (
          <li key={f.name} className="flex flex-col items-center gap-px">
            <span className="flex h-[30px] items-end justify-center pb-[2px]">{f.icon}</span>
            <span className={"rounded-xs px-[3px] leading-[12px] whitespace-nowrap " + (f.selected ? "bg-[#f3cb7a]" : "")}>{f.name}</span>
          </li>
        ))}
      </ul>
      <p className="flex h-[15px] shrink-0 items-center pl-[4px]">»index.php« ausgewählt (2,2 KB)</p>
    </section>
  );
}

export default function App() {
  return (
    <div className="grid h-screen min-h-[400px] grid-cols-[1065fr_811fr] overflow-hidden bg-[#bb754e] font-['DejaVu_Sans',sans-serif] text-[8px] leading-[12px] text-[#2b2826]">
      <div className="relative z-10 flex min-h-0 flex-col bg-[#efece8] shadow-[1px_0_3px_rgba(70,35,15,0.7)]">
        <TopPanel />
        <TitleBar />
        <div className="flex h-[16px] shrink-0 items-center justify-between border-b border-[#d8d3cd] bg-[#ebe7e3] pl-[5px] pr-[3px]">
          <nav className="flex gap-[11px]">
            <MenuItem label="Datei" />
            <MenuItem label="Bearbeiten" />
            <MenuItem label="Ansicht" />
            <MenuItem label="Chronik" />
            <MenuItem label="Lesezeichen" />
            <MenuItem label="Extras" at={1} />
            <MenuItem label="Hilfe" />
          </nav>
          <svg viewBox="0 0 10 10" className="size-[9px]" aria-hidden="true">
            <circle cx="5" cy="5" r="3.700" fill="none" stroke="#a5a09b" strokeWidth="2" strokeDasharray="1.400 1.500" />
          </svg>
        </div>
        <NavBar />
        <Bookmarks />
        <TabBar />
        <WebPage />
        <div className="flex h-[15px] shrink-0 items-center border-t border-[#c2bdb7] pl-[5px]">Fertig</div>
        <TaskBar />
        <svg viewBox="0 0 10 14" className="absolute top-[447px] left-[894px] h-[13px] w-[9px]" aria-hidden="true">
          <path d="M1 1v10l2.500-2.300L5.300 13l1.800-.8L5.300 8.300H9Z" fill="#fff" stroke="#1c1c1c" strokeWidth="1" />
        </svg>
      </div>
      <div className="flex min-h-0 flex-col">
        <div className="min-h-0 flex-1 pt-[87px] pr-4 pl-[102px]">
          <FileBrowser />
        </div>
        <div className="h-[16px] shrink-0 bg-black" />
      </div>
    </div>
  );
}
